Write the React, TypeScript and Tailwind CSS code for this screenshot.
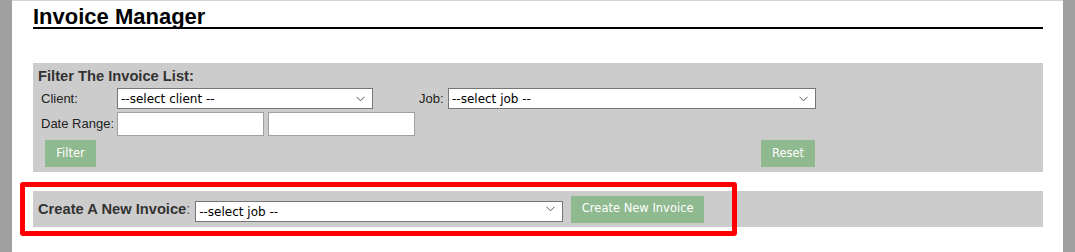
import React from 'react'

const ui = { fontFamily: '"Liberation Sans", Arial, sans-serif' }
const ctl = { fontFamily: '"DejaVu Sans", Tahoma, sans-serif' }

function Chevron() {
  return (
    <svg
      className="pointer-events-none absolute right-[8px] top-1/2 -translate-y-1/2"
      width="9"
      height="6"
      viewBox="0 0 9 6"
      fill="none"
    >
      <path d="M0.5 0.8 L4.5 4.8 L8.5 0.8" stroke="#555" strokeWidth="1" />
    </svg>
  )
}

function FakeSelect({ label, className }: { label: string; className: string }) {
  return (
    <div className={`relative ${className}`}>
      <select
        style={ctl}
        className="h-full w-full appearance-none rounded-none border border-[#767676] bg-white pl-[3px] text-[12px] text-black outline-none"
        defaultValue=""
      >
        <option value="">{label}</option>
      </select>
      <Chevron />
    </div>
  )
}

function GreenButton({ children, className }: { children: React.ReactNode; className: string }) {
  return (
    <button
      style={ctl}
      className={`flex items-center justify-center bg-[#8fb98f] text-[11.5px] text-white ${className}`}
    >
      {children}
    </button>
  )
}

export default function App() {
  return (
    <div style={ui} className="flex h-[252px] w-full overflow-hidden bg-white">
      <div className="w-[12px] shrink-0 bg-[#a0a0a0]" />
      <div className="flex-1 border-t border-[#d4d4d4] pl-[21px] pr-[20px]">
        <h1 className="border-b-2 border-black pt-[6px] text-[22px] font-bold leading-[20px] text-black">
          Invoice Manager
        </h1>

        <div className="mt-[34px] h-[109px] bg-[#cccccc] pt-[5px]">
          <div className="pl-[5px] text-[14.7px] font-bold leading-[17px] text-[#333]">
            Filter The Invoice List:
          </div>
          <div className="mt-[3px] flex items-center pl-[8px] text-[13px] text-[#222]">
            <span className="w-[76px]">Client:</span>
            <FakeSelect label="--select client --" className="h-[21px] w-[256px]" />
            <span className="ml-[46px] w-[29px]">Job:</span>
            <FakeSelect label="--select job --" className="h-[21px] w-[368px]" />
          </div>
          <div className="mt-[3px] flex items-center pl-[8px] text-[13px] text-[#222]">
            <span className="w-[76px]">Date Range:</span>
            <input className="h-[24px] w-[147px] border border-[#a0a0a0] bg-white" />
            <input className="ml-[4px] h-[24px] w-[147px] border border-[#a0a0a0] bg-white" />
          </div>
          <div className="mt-[4px] flex w-[782px] justify-between pl-[12px]">
            <GreenButton className="h-[27px] w-[51px]">Filter</GreenButton>
            <GreenButton className="h-[27px] w-[54px]">Reset</GreenButton>
          </div>
        </div>

        <div className="relative mt-[19px] flex h-[36px] items-center bg-[#cccccc] pl-[5px]">
          <span className="text-[14.7px] font-bold text-[#333]">Create A New Invoice</span>
          <span className="mr-[5px] text-[14px] text-[#555]">:</span>
          <FakeSelect label="--select job --" className="h-[21px] w-[368px]" />
          <GreenButton className="ml-[8px] h-[27px] w-[133px]">Create New Invoice</GreenButton>
          <div className="pointer-events-none absolute left-[-13px] top-[-9px] h-[54px] w-[717px] rounded-[3px] border-[5px] border-[#ff0000]" />
        </div>
      </div>
      <div className="w-[12px] shrink-0 bg-[#a0a0a0]" />
    </div>
  )
}
